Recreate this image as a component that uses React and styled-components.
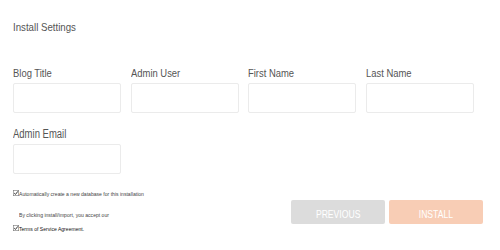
import styled, { createGlobalStyle } from 'styled-components';

// no narrow face installed, so the condensed look is done with scaleX
const FONT = '"Liberation Sans", Arial, sans-serif';

const GlobalStyle = createGlobalStyle`
  body {
    margin: 0;
    background: #ffffff;
    font-family: ${FONT};
  }
`;

const fields = ['Blog Title', 'Admin User', 'First Name', 'Last Name'];

export default function App(){
	return(
		<>
			<GlobalStyle />
			<Page>
				<Heading><Narrow scale={0.88}>Install Settings</Narrow></Heading>
				<FieldGrid>
					{fields.map(name => (
						<Field key={name}>
							<Label><Narrow>{name}</Narrow></Label>
							<Input type="text" />
						</Field>
					))}
					<Field>
						<Label big><Narrow scale={0.76}>Admin Email</Narrow></Label>
						<Input type="text" />
					</Field>
				</FieldGrid>
				<Bottom>
					<Notes>
						<CheckRow>
							<Check />
							<Narrow>Automatically create a new database for this installation</Narrow>
						</CheckRow>
						<Notice><Narrow>By clicking install/import, you accept our</Narrow></Notice>
						<CheckRow strong>
							<Check />
							<Narrow>Terms of Service Agreement.</Narrow>
						</CheckRow>
					</Notes>
					<Buttons>
						<Button><Narrow center>PREVIOUS</Narrow></Button>
						<Button primary><Narrow center>INSTALL</Narrow></Button>
					</Buttons>
				</Bottom>
			</Page>
		</>
	);
}

function Check(){
	return(
		<CheckBox viewBox="0 0 6 6">
			<rect x="0.3" y="0.3" width="5.4" height="5.4" fill="#fff" stroke="#777" strokeWidth="0.6" />
			<path d="M1.2 3.1 L2.5 4.4 L4.9 1.3" fill="none" stroke="#222" strokeWidth="0.9" />
		</CheckBox>
	);
}

const Page = styled.div`
  width: 500px;
  height: 250px;
  box-sizing: border-box;
  padding: 21px 17px 0 13px;
  color: #555;
`;

const Narrow = styled.span`
  display: inline-block;
  white-space: nowrap;
  transform: scaleX(${({scale}) => scale || 0.82});
  transform-origin: ${({center}) => center ? 'center' : 'left'};
`;

const Heading = styled.div`
  font-size: 11px;
  line-height: 13px;
  color: #555;
`;

const FieldGrid = styled.div`
  display: grid;
  grid-template-columns: repeat(4, 108px);
  column-gap: 9.7px;
  row-gap: 15px;
  margin-top: 33px;
`;

const Field = styled.div`
  display: flex;
  flex-direction: column;
  gap: 3px;
`;

const Label = styled.label`
  font-size: ${({big}) => big ? '12.5px' : '11.5px'};
  line-height: 13px;
  color: #555;
`;

const Input = styled.input`
  box-sizing: border-box;
  width: 108px;
  height: 30px;
  margin: 0;
  border: 1px solid #ebebeb;
  border-radius: 2px;
  background: #fff;
  outline: none;
`;

const Bottom = styled.div`
  display: flex;
  justify-content: space-between;
  margin-top: 15px;
`;

const Notes = styled.div`
  display: flex;
  flex-direction: column;
`;

const CheckRow = styled.div`
  display: flex;
  align-items: center;
  height: 8px;
  font-size: 6.2px;
  color: ${({strong}) => strong ? '#111' : '#444'};
`;

const CheckBox = styled.svg`
  width: 6px;
  height: 6px;
  flex: none;
`;

const Notice = styled.div`
  font-size: 6.2px;
  line-height: 8px;
  color: #444;
  padding-left: 6px;
  margin: 14px 0 5px;
`;

const Buttons = styled.div`
  display: flex;
  gap: 4px;
  margin-top: 11px;
`;

const Button = styled.button`
  box-sizing: border-box;
  width: 94px;
  height: 24px;
  border: none;
  border-radius: 2px;
  padding: 4px 0 0;
  background: ${({primary}) => primary ? '#f8cdb5' : '#dcdcdc'};
  color: #fff;
  font-family: ${FONT};
  font-size: 10.5px;
  cursor: pointer;
`;
